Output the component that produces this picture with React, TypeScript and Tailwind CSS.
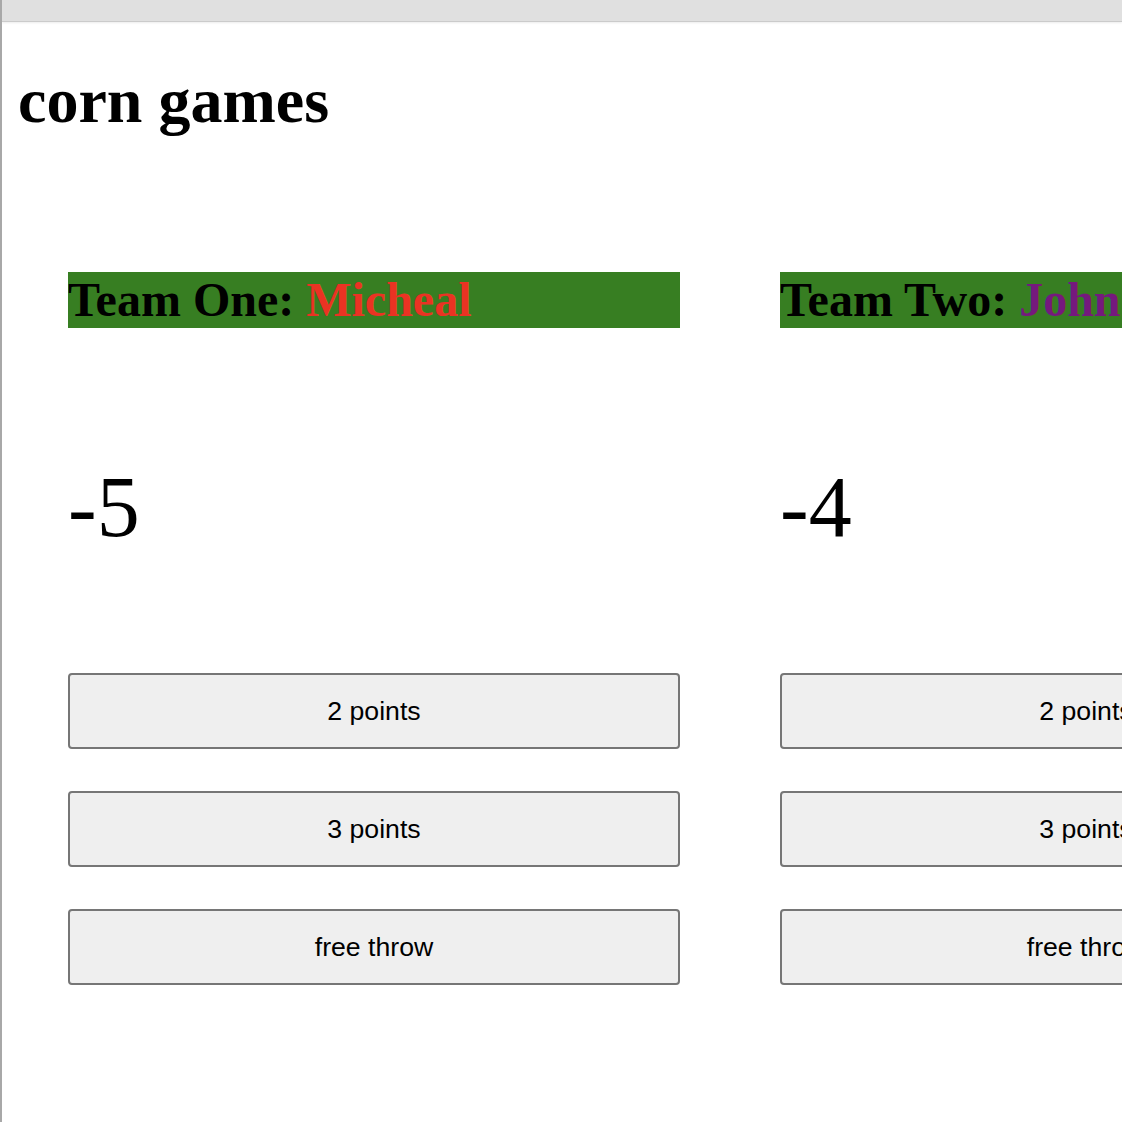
import React from "react";

const serif = { fontFamily: '"Liberation Serif", "Times New Roman", serif' };

function Team({ label, name, nameColor, score }: { label: string; name: string; nameColor: string; score: string }) {
  return (
    <div className="w-[612px] shrink-0 flex flex-col">
      <h2
        className="m-0 bg-[#377e22] text-[48px] leading-[56px] h-[56px] font-bold text-black whitespace-nowrap"
        style={serif}
      >
        {label} <span className={nameColor}>{name}</span>
      </h2>
      <div className="mt-[130px] text-[86px] leading-[99px] text-black" style={serif}>
        {score}
      </div>
      <div className="mt-[116px] flex flex-col gap-[42px]">
        {["2 points", "3 points", "free throw"].map((t) => (
          <button
            key={t}
            className="w-[612px] h-[76px] bg-[#efefef] border-2 border-[#767676] rounded-[4px] text-[26.67px] text-black whitespace-nowrap overflow-hidden"
            style={{ fontFamily: '"Liberation Sans", Arial, sans-serif' }}
          >
            {t}
          </button>
        ))}
      </div>
    </div>
  );
}

export default function App() {
  return (
    <div className="w-[1122px] h-[1122px] overflow-hidden bg-white border-l-2 border-[#a8a8a8] flex flex-col">
      <div className="h-[22px] shrink-0 bg-[#e0e0e0] border-b border-[#cbcbcb] shadow-[0_1px_2px_rgba(0,0,0,0.08)]" />
      <div className="pl-[16px]">
        <h1 className="m-0 mt-[42px] text-[64px] leading-[74px] font-bold text-black whitespace-nowrap" style={serif}>
          corn games
        </h1>
        <div className="mt-[134px] pl-[50px] flex gap-[100px]">
          <Team label="Team One:" name="Micheal" nameColor="text-[#ea3323]" score="-5" />
          <Team label="Team Two:" name="John" nameColor="text-[#75197d]" score="-4" />
        </div>
      </div>
    </div>
  );
}
